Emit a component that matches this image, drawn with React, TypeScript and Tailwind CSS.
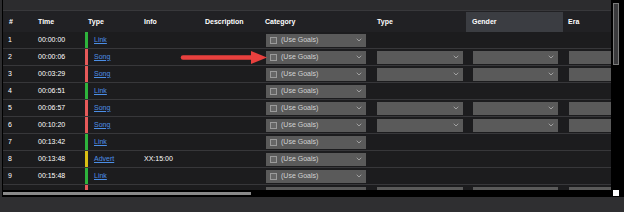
import { ChevronDown } from "lucide-react";

type Kind = "Link" | "Song" | "Advert";

const rows: { n: number; time: string; kind: Kind; info?: string }[] = [
  { n: 1, time: "00:00:00", kind: "Link" },
  { n: 2, time: "00:00:06", kind: "Song" },
  { n: 3, time: "00:03:29", kind: "Song" },
  { n: 4, time: "00:06:51", kind: "Link" },
  { n: 5, time: "00:06:57", kind: "Song" },
  { n: 6, time: "00:10:20", kind: "Song" },
  { n: 7, time: "00:13:42", kind: "Link" },
  { n: 8, time: "00:13:48", kind: "Advert", info: "XX:15:00" },
  { n: 9, time: "00:15:48", kind: "Link" },
  { n: 10, time: "00:15:52", kind: "Song" },
];

const barColor: Record<Kind, string> = {
  Link: "bg-[#2eb33c]",
  Song: "bg-[#e65a5a]",
  Advert: "bg-[#d9bf14]",
};

function Select({ width, goals }: { width: string; goals?: boolean }) {
  return (
    <div className={`flex h-[13px] shrink-0 items-center bg-[#5a5a5a] ${width}`}>
      {goals && (
        <>
          <span className="ml-[4px] h-[7px] w-[7px] border border-[#9a9a9a] bg-[#666]" />
          <span className="ml-[4px] text-[7px] text-[#d2d2d2]">(Use Goals)</span>
        </>
      )}
      <ChevronDown className="ml-auto mr-[3px] h-[8px] w-[8px] text-[#c4c4c4]" strokeWidth={2} />
    </div>
  );
}

export default function App() {
  return (
    <div className="h-[212px] w-[624px] overflow-hidden bg-[#2d2d2f] font-['Liberation_Sans',Arial,sans-serif] text-white">
      <div className="flex h-[197px]">
        <div className="w-[2px] bg-[#2d2d2f]" />
        <div className="flex w-[609px] flex-col border-l border-black">
          <div className="h-[10px] shrink-0 bg-[#2c2c2e]" />
          {/* header */}
          <div className="flex h-[22px] shrink-0 items-center overflow-hidden border-t border-[#38383b] bg-[#212124] pt-[1px] text-[7px] font-bold">
            <div className="w-[30px] shrink-0 pl-[6px]">#</div>
            <div className="w-[50px] shrink-0 pl-[5px]">Time</div>
            <div className="w-[57px] shrink-0 pl-[5px]">Type</div>
            <div className="w-[60px] shrink-0 pl-[4px]">Info</div>
            <div className="w-[62px] shrink-0 pl-[5px]">Description</div>
            <div className="w-[110px] shrink-0 pl-[3px]">Category</div>
            <div className="w-[94px] shrink-0 pl-[5px]">Type</div>
            <div className="flex h-full w-[97px] shrink-0 items-center bg-[#3b3d42] pl-[6px]">Gender</div>
            <div className="w-[60px] shrink-0 pl-[5px]">Era</div>
          </div>
          {/* body */}
          <div className="relative h-[158px] shrink-0 overflow-hidden bg-[#1c1c1e]">
            {rows.map((r) => {
              const song = r.kind === "Song";
              return (
                <div key={r.n} className="flex h-[17px] items-center border-b border-[#37373a] text-[7px]">
                  <div className="w-[30px] shrink-0 pl-[5px]">{r.n}</div>
                  <div className="w-[50px] shrink-0 pl-[5px]">{r.time}</div>
                  <div className="flex h-full w-[57px] shrink-0 items-center">
                    <div className={`ml-[2px] h-full w-[3px] ${barColor[r.kind]}`} />
                    <span className="ml-[6px] text-[#4c8fe6] underline">{r.kind}</span>
                  </div>
                  <div className="w-[60px] shrink-0 pl-[4px]">{r.info}</div>
                  <div className="w-[62px] shrink-0" />
                  <div className="w-[110px] shrink-0 pl-[4px]">
                    <Select width="w-[100px]" goals />
                  </div>
                  <div className="w-[94px] shrink-0 pl-[5px]">{song && <Select width="w-[86px]" />}</div>
                  <div className="w-[97px] shrink-0 pl-[7px]">{song && <Select width="w-[85px]" />}</div>
                  <div className="w-[60px] shrink-0 pl-[6px]">{song && <Select width="w-[54px]" />}</div>
                </div>
              );
            })}
            <svg className="absolute left-[176px] top-[17px]" width="90" height="16" viewBox="0 0 90 16">
              <line x1="4" y1="8.5" x2="76" y2="8.5" stroke="#e8403e" strokeWidth="4.5" strokeLinecap="round" />
              <polygon points="72,2 88,8.5 72,15" fill="#e8403e" />
            </svg>
          </div>
          {/* horizontal scrollbar */}
          <div className="flex h-[7px] shrink-0 items-start bg-black pt-[2px]">
            <div className="h-[3px] w-[248px] bg-[#8a8a8a]" />
          </div>
        </div>
        {/* vertical scrollbar */}
        <div className="relative w-[13px] bg-black">
          <div className="absolute left-[2px] top-[3px] h-[62px] w-[6px] border border-[#7a7a7a] bg-[#3a3a3c]" />
          <div className="absolute bottom-[1px] left-[2px] h-[6px] w-[6px] bg-white" />
        </div>
      </div>
      <div className="h-[15px] bg-[#2f2f31]" />
    </div>
  );
}
